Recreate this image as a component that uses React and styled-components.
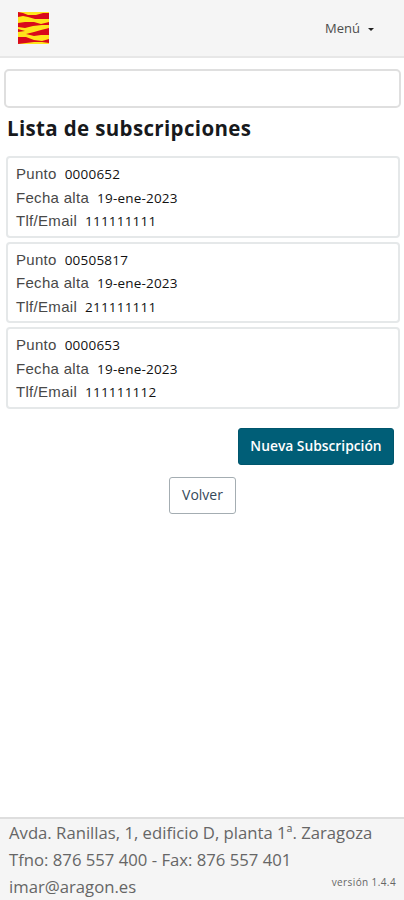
import React from "react";
import styled, { createGlobalStyle } from "styled-components";

const GlobalStyle = createGlobalStyle`
  * { box-sizing: border-box; }
  body { margin: 0; background: #fff; font-family: "Open Sans", sans-serif; }
`;

const Page = styled.div`
  display: flex;
  flex-direction: column;
  width: 100%;
  height: 100vh;
  overflow: hidden;
`;

const Header = styled.header`
  display: flex;
  align-items: center;
  justify-content: space-between;
  flex: none;
  height: 58px;
  padding: 0 30px 1px 18px;
  background: #f5f5f5;
  border-bottom: 2px solid #e7e7e7;
`;

const Flag = styled.svg`
  display: block;
  width: 31px;
  height: 32px;
`;

const MenuButton = styled.button`
  display: flex;
  align-items: center;
  gap: 8px;
  padding: 0;
  border: 0;
  background: none;
  color: #4c4c4c;
  font: 400 13px/20px "Open Sans", sans-serif;
`;

const Caret = styled.span`
  width: 6px;
  margin-top: 3px;
  border: 3px solid transparent;
  border-top-color: #222;
  border-bottom: 0;
`;

const Main = styled.main`
  display: flex;
  flex-direction: column;
  flex: 1;
  padding: 11px 3px 0 4px;
`;

const SearchBox = styled.input`
  width: 100%;
  height: 39px;
  padding: 0 10px;
  border: 2px solid #dfdfdf;
  border-radius: 5px;
  background: #fff;
  outline: 0;
`;

const Title = styled.h1`
  margin: 6px 0 13px 3px;
  color: #17191c;
  font-size: 20.5px;
  font-weight: 700;
  line-height: 29px;
  letter-spacing: 0.35px;
`;

const List = styled.div`
  display: flex;
  flex-direction: column;
  gap: 4px;
  margin: 0 1px 0 2px;
`;

const Card = styled.article`
  height: 81.5px;
  padding: 4px 8px;
  border: 2px solid #e5e8e9;
  border-radius: 4px;
`;

const Field = styled.div`
  display: flex;
  align-items: baseline;
  gap: 8px;
  height: 23.6px;
  line-height: 23.6px;
`;

const Label = styled.span`
  color: #484848;
  font-family: "Liberation Sans", sans-serif;
  font-size: 15px;
  letter-spacing: 0.3px;
`;

const Value = styled.span`
  color: #111;
  font-size: 13.5px;
  font-weight: 500;
  letter-spacing: 0.2px;
`;

const PrimaryButton = styled.button`
  align-self: flex-end;
  width: 156px;
  height: 37px;
  margin: 19px 7px 0 0;
  padding: 0;
  border: 1px solid #00566d;
  border-radius: 3px;
  background: #005e77;
  color: #fff;
  font: 600 13.8px/20px "Open Sans", sans-serif;
  white-space: nowrap;
`;

const SecondaryButton = styled.button`
  align-self: center;
  width: 67px;
  height: 37px;
  margin: 12px 0 0;
  padding: 0;
  border: 1px solid #a4adb2;
  border-radius: 3px;
  background: #fff;
  color: #34495a;
  font: 400 14px/20px "Open Sans", sans-serif;
`;

const Footer = styled.footer`
  display: flex;
  align-items: flex-end;
  justify-content: space-between;
  flex: none;
  height: 83px;
  padding: 0 8px 0 9px;
  border-top: 2px solid #dedede;
  background: #f5f5f5;
  color: #666;
`;

const Address = styled.address`
  width: 0;
  font-size: 16.7px;
  font-style: normal;
  line-height: 27px;
  white-space: nowrap;
`;

const Version = styled.span`
  margin-bottom: 11px;
  font-size: 10px;
  line-height: 14px;
  letter-spacing: 0.4px;
`;

const subscriptions = [
  { punto: "0000652", fecha: "19-ene-2023", contacto: "111111111" },
  { punto: "00505817", fecha: "19-ene-2023", contacto: "211111111" },
  { punto: "0000653", fecha: "19-ene-2023", contacto: "111111112" },
];

function AragonFlag() {
  return (
    <Flag viewBox="0 0 31 32" aria-label="Gobierno de Aragón">
      <path fill="#ffe51b" d="M0 0h31v32H0z" />
      <path
        fill="#d9091b"
        d="M0 0L5 1L10 3L18 3L25 1L31 1V7L25 7L17 7L10 5L5 4L0 5Z
           M0 11L7 10L16 10L23 12L31 10V13L24 13L15 14L7 16L0 15Z
           M0 17L7 19L0 20Z
           M8 22L16 20L23 18L31 16V23L23 23L16 24Z
           M0 25L8 25L16 28L24 29L31 27V31L24 30L16 30L8 31L0 32Z"
      />
    </Flag>
  );
}

function SubscriptionCard({ item }) {
  return (
    <Card>
      <Field><Label>Punto</Label><Value>{item.punto}</Value></Field>
      <Field><Label>Fecha alta</Label><Value>{item.fecha}</Value></Field>
      <Field><Label>Tlf/Email</Label><Value>{item.contacto}</Value></Field>
    </Card>
  );
}

export default function App() {
  return (
    <Page>
      <GlobalStyle />
      <Header>
        <AragonFlag />
        <MenuButton>Menú <Caret /></MenuButton>
      </Header>
      <Main>
        <SearchBox />
        <Title>Lista de subscripciones</Title>
        <List>
          {subscriptions.map((item) => <SubscriptionCard key={item.punto} item={item} />)}
        </List>
        <PrimaryButton>Nueva Subscripción</PrimaryButton>
        <SecondaryButton>Volver</SecondaryButton>
      </Main>
      <Footer>
        <Address>
          Avda. Ranillas, 1, edificio D, planta 1ª. Zaragoza<br />
          Tfno: 876 557 400 - Fax: 876 557 401<br />
          imar@aragon.es
        </Address>
        <Version>versión 1.4.4</Version>
      </Footer>
    </Page>
  );
}
